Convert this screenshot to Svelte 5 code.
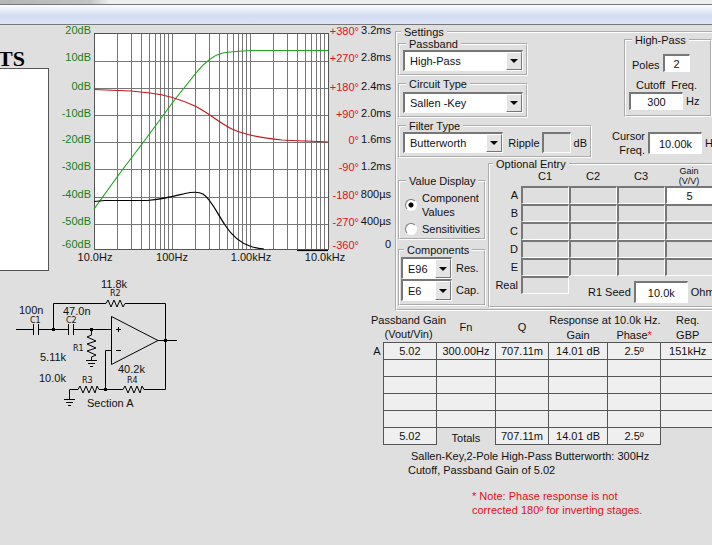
<script lang="ts">
  type Label = { x: number; y: number; text: string };

  let passband = "High-Pass";
  let circuit = "Sallen -Key";
  let filter = "Butterworth";
  let resSeries = "E96";
  let capSeries = "E6";
  let display = "values";
  let poles = "2";
  let cutoff = "300";
  let cursor = "10.00k";
  let gain = "5";
  let seed = "10.0k";

  // plot area
  const left = 94;
  const right = 328;
  const top = 33;
  const bottom = 249;
  const decade = 78;

  const hLines = [61, 88, 115, 142, 169, 197, 224];
  const vLines: number[] = [];
  for (let d = 0; d < 3; d++) {
    for (let n = 1; n < 10; n++) {
      if (d || n > 1) vLines.push(Math.round(left + decade * (d + Math.log10(n))));
    }
  }

  const rows = [
    { y: 34, db: "20dB", deg: "+380°", delay: "3.2ms" },
    { y: 61, db: "10dB", deg: "+270°", delay: "2.8ms" },
    { y: 90, db: "0dB", deg: "+180°", delay: "2.4ms" },
    { y: 117, db: "-10dB", deg: "+90°", delay: "2.0ms" },
    { y: 143, db: "-20dB", deg: "0°", delay: "1.6ms" },
    { y: 170, db: "-30dB", deg: "-90°", delay: "1.2ms" },
    { y: 198, db: "-40dB", deg: "-180°", delay: "800µs" },
    { y: 225, db: "-50dB", deg: "-270°", delay: "400µs" },
    { y: 248, db: "-60dB", deg: "-360°", delay: "0" },
  ];

  const freqs: Label[] = [
    { x: 95, y: 261, text: "10.0Hz" },
    { x: 172, y: 261, text: "100Hz" },
    { x: 251, y: 261, text: "1.00kHz" },
    { x: 325, y: 261, text: "10.0kHz" },
  ];

  const values: Label[] = [
    { x: 101, y: 288, text: "11.8k" },
    { x: 19, y: 314, text: "100n" },
    { x: 63, y: 315, text: "47.0n" },
    { x: 40, y: 361, text: "5.11k" },
    { x: 39, y: 382, text: "10.0k" },
    { x: 118, y: 373, text: "40.2k" },
    { x: 87, y: 407, text: "Section A" },
  ];

  const names: Label[] = [
    { x: 110, y: 296, text: "R2" },
    { x: 30, y: 323, text: "C1" },
    { x: 66, y: 323, text: "C2" },
    { x: 73, y: 351, text: "R1" },
    { x: 82, y: 383, text: "R3" },
    { x: 127, y: 383, text: "R4" },
  ];

  const dots = [
    [53, 329],
    [91, 329],
    [165, 340],
    [105, 389],
  ];

  const sections = ["A", "B", "C", "D", "E"];
  const caps = ["C1", "C2", "C3"];
  const results = [
    ["A", "5.02", "300.00Hz", "707.11m", "14.01 dB", "2.5º", "151kHz"],
    ["", "", "", "", "", "", ""],
    ["", "", "", "", "", "", ""],
    ["", "", "", "", "", "", ""],
    ["", "", "", "", "", "", ""],
  ];
</script>

{#snippet arrow()}
  <span class="drop" aria-hidden="true">
    <svg width="8" height="4" viewBox="0 0 8 4"><path d="M0 0H8L4 4Z" /></svg>
  </span>
{/snippet}

<div class="app">
  <header>
    <div class="chrome"></div>
    <div class="bar"></div>
  </header>

  <main>
    <section class="plot">
      <div class="parts">
        <h1>TS</h1>
        <div class="list"></div>
      </div>

      <svg class="chart" width="346" height="246" viewBox="49 25 346 246" role="img" aria-label="Response">
        <rect x={left} y={top} width={right - left} height={bottom - top} fill="#fff" />
        <g class="grid">
          {#each hLines as y}
            <line x1={left} x2={right} y1={y + 0.5} y2={y + 0.5} />
          {/each}
          {#each vLines as x}
            <line x1={x + 0.5} x2={x + 0.5} y1={top} y2={bottom} />
          {/each}
        </g>
        <path class="frame" d="M94.5 33.5H328.5V249.5H94.5Z" />

        <path class="curve green" d="M94 209L120 173L145 140L176 98L196 73C205 62 213 55 223 53C233 51 243 51 253 50.500H328" />
        <path class="curve red" d="M94 89.500L131 91L150 93C168 95 180 99 196 106.500C210 114 220 123 232 129C245 135 260 138 282 140C298 141 312 141 328 142" />
        <path class="curve black" d="M94 201.500L105 200.500H147C165 199 175 196 185 193.500C192 192 198 191 203 194C211 199 217 213 225 225C232 236 240 243 251 246.500C256 248 259 248.500 264 249" />
        <path class="curve black" d="M297 250.500H328" />

        {#each rows as r}
          <text class="db" x="91" y={r.y} text-anchor="end">{r.db}</text>
          <text class="deg" x="359" y={r.y + 1} text-anchor="end">{r.deg}</text>
          <text x="391" y={r.y} text-anchor="end">{r.delay}</text>
        {/each}
        {#each freqs as f}
          <text x={f.x} y={f.y} text-anchor="middle">{f.text}</text>
        {/each}
      </svg>
    </section>

    <fieldset class="settings">
      <legend>Settings</legend>

      <div class="upper">
        <div class="types">
          <fieldset class="short">
            <legend>Passband</legend>
            <div class="combo">
              <select aria-label="Passband" bind:value={passband}>
                <option>High-Pass</option>
                <option>Low-Pass</option>
              </select>
              {@render arrow()}
            </div>
          </fieldset>

          <fieldset class="short circuit">
            <legend>Circuit Type</legend>
            <div class="combo">
              <select aria-label="Circuit Type" bind:value={circuit}>
                <option>Sallen -Key</option>
              </select>
              {@render arrow()}
            </div>
          </fieldset>

          <fieldset>
            <legend>Filter Type</legend>
            <div class="line">
              <div class="combo filter">
                <select aria-label="Filter Type" bind:value={filter}>
                  <option>Butterworth</option>
                </select>
                {@render arrow()}
              </div>
              <label class="ripple">Ripple <input class="box off" disabled /></label>
              <span>dB</span>
            </div>
          </fieldset>
        </div>

        <div class="side">
          <fieldset class="highpass">
            <legend>High-Pass</legend>
            <label class="poles">Poles <input class="box" bind:value={poles} /></label>
            <label class="cutoff" for="cutoff">Cutoff&nbsp; Freq.</label>
            <div class="line">
              <input id="cutoff" class="box wide" bind:value={cutoff} />
              <span>Hz</span>
            </div>
          </fieldset>
          <div class="cursor">
            <label for="cursor">Cursor<br />Freq.</label>
            <input id="cursor" class="box wide tall" bind:value={cursor} />
            <span>Hz</span>
          </div>
        </div>
      </div>

      <div class="lower">
        <div class="options">
          <fieldset class="display">
            <legend>Value Display</legend>
            <label><input type="radio" value="values" bind:group={display} /><span>Component Values</span></label>
            <label><input type="radio" value="sens" bind:group={display} /><span>Sensitivities</span></label>
          </fieldset>

          <fieldset class="series">
            <legend>Components</legend>
            <div class="line">
              <div class="combo">
                <select id="res" bind:value={resSeries}>
                  <option>E96</option>
                  <option>E24</option>
                </select>
                {@render arrow()}
              </div>
              <label for="res">Res.</label>
            </div>
            <div class="line">
              <div class="combo">
                <select id="cap" bind:value={capSeries}>
                  <option>E6</option>
                  <option>E12</option>
                </select>
                {@render arrow()}
              </div>
              <label for="cap">Cap.</label>
            </div>
          </fieldset>
        </div>

        <fieldset class="entry">
          <legend>Optional Entry</legend>
          <table>
            <thead>
              <tr>
                <th class="name"></th>
                {#each caps as c}
                  <th>{c}</th>
                {/each}
                <th class="gain">Gain<br />(V/V)</th>
              </tr>
            </thead>
            <tbody>
              {#each sections as s, i}
                <tr>
                  <th class="name">{s}</th>
                  {#each caps as c}
                    <td><input class="box off" aria-label={c + " " + s} disabled /></td>
                  {/each}
                  <td>
                    {#if i === 0}
                      <input class="box" aria-label="Gain A" bind:value={gain} />
                    {:else}
                      <input class="box off" aria-label={"Gain " + s} disabled />
                    {/if}
                  </td>
                </tr>
              {/each}
              <tr class="real">
                <th class="name">Real</th>
                <td><input class="box off" aria-label="Real C1" disabled /></td>
                <td colspan="3">
                  <div class="seed">
                    <label for="seed">R1 Seed</label>
                    <input id="seed" class="box wide tall" bind:value={seed} />
                    <span>Ohms</span>
                  </div>
                </td>
              </tr>
            </tbody>
          </table>
        </fieldset>
      </div>
    </fieldset>

    <svg class="circuit-diagram" width="200" height="145" viewBox="0 271 200 145" role="img" aria-label="Section A">
      <g class="wire">
        <path d="M16 329.500H33M39 329.500H68M74 329.500H111" />
        <path d="M33.500 324V335M38.500 324V335M68.500 324V335M73.500 324V335" />
        <path d="M53.500 329.500V303.500H106L108 300L111 307L114 300L117 307L120 300L123 307L125 303.500H165.500V389.500H144L142 386L140 393L137 386L134 393L131 386L128 393L125 386L123 389.500H99L97 386L95 393L92 386L89 393L86 386L83 393L80 386L78 389.500H69.500V399" />
        <path d="M91.500 329.500V335L87 337L96 341L87 344L96 348L87 351L96 355L91.500 357V361" />
        <path d="M86 360.500H97M88 363.500H95M90 366.500H93" />
        <path d="M64 399.500H75M66 402.500H73M68 405.500H71" />
        <path d="M111.500 316.500L158 340.500L111.500 364.500Z" />
        <path d="M158 340.500H177M111 350.500H105.500V389.500" />
        <path d="M116 329.500H121M118.500 327V332M116 350.500H121" />
      </g>
      {#each dots as [x, y]}
        <rect x={x - 1} y={y - 1} width="3" height="3" />
      {/each}
      {#each values as v}
        <text x={v.x} y={v.y}>{v.text}</text>
      {/each}
      {#each names as n}
        <text class="part" x={n.x} y={n.y}>{n.text}</text>
      {/each}
    </svg>

    <section class="results">
      <table>
        <colgroup>
          <col class="c0" /><col class="c1" /><col class="c2" /><col class="c1" />
          <col class="c2" /><col class="c1" /><col class="c1" />
        </colgroup>
        <thead>
          <tr>
            <th colspan="2" rowspan="2" class="pg"><span>Passband Gain<br />(Vout/Vin)</span></th>
            <th rowspan="2">Fn</th>
            <th rowspan="2">Q</th>
            <th colspan="2">Response at 10.0k Hz.</th>
            <th>Req.</th>
          </tr>
          <tr>
            <th>Gain</th>
            <th>Phase<b>*</b></th>
            <th>GBP</th>
          </tr>
        </thead>
        <tbody>
          {#each results as r}
            <tr>
              <th>{r[0]}</th>
              {#each r.slice(1) as cell}
                <td>{cell}</td>
              {/each}
            </tr>
          {/each}
          <tr>
            <th></th>
            <td>5.02</td>
            <th class="totals">Totals</th>
            <td>707.11m</td>
            <td>14.01 dB</td>
            <td>2.5º</td>
          </tr>
        </tbody>
      </table>
      <p class="summary">Sallen-Key,2-Pole High-Pass Butterworth: 300Hz<br />Cutoff, Passband Gain of 5.02</p>
      <p class="note">* Note: Phase response is not<br />corrected 180º for inverting stages.</p>
    </section>
  </main>
</div>

<style>
  :global(body) {
    margin: 0;
    background: #dfdfdf;
  }
  .app {
    min-height: 100vh;
    overflow: hidden;
    background: #dfdfdf;
    color: #111;
    font: 11px/14px "Liberation Sans", Arial, sans-serif;
    white-space: nowrap;
  }
  .chrome {
    height: 4px;
    background: linear-gradient(90deg, #b5b5b5, #c4c4c4 90px, #eee 110px);
    border-bottom: 1px solid #777;
  }
  .bar {
    height: 19px;
    background: linear-gradient(#fbfcff, #d3dcf0 55%, #dde4f8);
    border-bottom: 1px solid #777;
  }
  main {
    display: grid;
    grid-template-columns: 371px 24px 1fr;
    grid-template-rows: 246px 40px auto;
    min-width: 724px;
  }
  select, input {
    font: inherit;
    color: inherit;
  }
  th, b {
    font-weight: normal;
  }

  /* plot */
  .plot {
    grid-area: 1 / 1 / 2 / 3;
    display: flex;
  }
  .parts {
    width: 49px;
    display: flex;
    flex-direction: column;
  }
  h1 {
    width: 25px;
    height: 43px;
    margin: 0;
    display: flex;
    align-items: flex-end;
    justify-content: flex-end;
    font: bold 22px/18px "Liberation Serif", serif;
    color: #000;
  }
  .list {
    flex: 1;
    background: #fff;
    border: 1px solid #555;
    border-left: 0;
  }
  .chart {
    display: block;
  }
  svg text {
    fill: #111;
  }
  svg .db {
    fill: #17801a;
  }
  svg .deg {
    fill: #e01020;
  }
  .grid line {
    stroke: #777;
    shape-rendering: crispEdges;
  }
  .frame {
    fill: none;
    stroke: #555;
    shape-rendering: crispEdges;
  }
  .curve {
    fill: none;
    stroke-width: 1.2;
  }
  .green { stroke: #1ea61e; }
  .red { stroke: #c8141c; }
  .black { stroke: #000; }

  /* group boxes */
  fieldset {
    min-width: 0;
    margin: 0;
    padding: 0 3px 3px;
    border: 2px groove #fff;
  }
  legend {
    margin-left: 3px;
    padding: 0 3px;
    line-height: 12px;
  }
  .settings {
    grid-area: 1 / 3 / 3 / 4;
    margin-top: 1px;
    padding: 0 1px 1px;
  }
  .upper, .lower, .line, .cursor, .seed {
    display: flex;
  }
  .line {
    align-items: center;
  }
  .types {
    width: 194px;
    display: flex;
    flex-direction: column;
    gap: 2px;
  }
  .short {
    width: 130px;
    box-sizing: border-box;
  }
  .circuit {
    padding-top: 2px;
  }

  .combo {
    display: grid;
    height: 21px;
    box-sizing: border-box;
    background: #fff;
    border: 1px solid #fff;
    border-top: 2px solid #777;
    border-left: 2px solid #777;
  }
  .combo select {
    grid-area: 1 / 1;
    width: 100%;
    min-width: 0;
    padding: 0 0 0 5px;
    border: 0;
    background: none;
    appearance: none;
  }
  .drop {
    grid-area: 1 / 1;
    justify-self: end;
    width: 16px;
    box-sizing: border-box;
    display: grid;
    place-items: center;
    background: #e4e4e4;
    border: 1px solid #fff;
    border-right-color: #777;
    border-bottom-color: #777;
    pointer-events: none;
  }
  .filter {
    width: 102px;
  }
  .box {
    width: 100%;
    height: 18px;
    box-sizing: border-box;
    padding: 0;
    text-align: center;
    background: #fff;
    border: 1px solid #fff;
    border-top: 2px solid #777;
    border-left: 2px solid #777;
    border-radius: 0;
  }
  .off {
    background: #dfdfdf;
  }
  .wide {
    width: 54px;
  }
  .tall {
    height: 22px;
  }
  .ripple {
    display: flex;
    align-items: center;
    gap: 2px;
    margin: 0 3px 0 5px;
  }
  .ripple .box {
    width: 29px;
    height: 21px;
  }

  .side {
    width: 120px;
    margin: -4px 0 0 20px;
  }
  .highpass {
    width: 88px;
    box-sizing: border-box;
    margin-left: 12px;
    padding: 8px 3px 5px;
  }
  .poles {
    display: flex;
    align-items: flex-end;
    gap: 3px;
    margin-left: 3px;
  }
  .poles .box {
    width: 27px;
  }
  .cutoff {
    display: block;
    margin: 6px 0 0 7px;
  }
  .highpass .line, .cursor, .seed {
    gap: 3px;
  }
  .cursor {
    align-items: center;
    margin-top: 12px;
  }
  .cursor label {
    text-align: right;
  }

  .lower {
    gap: 2px;
  }
  .options {
    width: 88px;
    padding-top: 17px;
    display: flex;
    flex-direction: column;
    gap: 4px;
  }
  .display {
    padding: 4px 3px 2px 5px;
  }
  .display legend {
    margin-left: 1px;
  }
  .display label {
    display: flex;
    align-items: center;
    gap: 5px;
    white-space: normal;
  }
  .display label + label {
    margin-top: 3px;
  }
  .display input {
    appearance: none;
    flex: none;
    width: 12px;
    height: 12px;
    margin: 0;
    border: 1px solid #777;
    border-right-color: #fff;
    border-bottom-color: #fff;
    border-radius: 50%;
    background: #fff;
  }
  .display input:checked {
    background: radial-gradient(circle, #000 2px, #fff 3px);
  }
  .series {
    padding: 1px 1px 3px;
  }
  .series .combo {
    width: 51px;
    height: 22px;
  }
  .series .line {
    gap: 4px;
  }

  .entry {
    flex: 1;
    padding: 0;
  }
  .entry table {
    width: 223px;
    margin-top: -4px;
    table-layout: fixed;
    border-collapse: collapse;
  }
  .entry th, .entry td {
    width: 48px;
    padding: 0;
    height: 18px;
    line-height: 10px;
  }
  .entry thead th {
    height: 20px;
  }
  .entry .name {
    width: 31px;
    padding-right: 3px;
    box-sizing: border-box;
    text-align: right;
  }
  .entry .gain {
    font-size: 9px;
  }
  .entry .box {
    display: block;
  }
  .entry .real > * {
    height: 30px;
    vertical-align: top;
  }
  .entry .real .name {
    padding-top: 4px;
  }
  .seed {
    align-items: center;
    padding: 5px 0 0 19px;
  }

  /* schematic */
  .circuit-diagram {
    grid-area: 2 / 1 / 4 / 2;
    display: block;
  }
  .wire {
    fill: none;
    stroke: #000;
  }
  svg .part {
    font: 8px "DejaVu Sans", sans-serif;
  }

  /* results */
  .results {
    grid-area: 3 / 2 / 4 / 4;
    padding-top: 1px;
  }
  .results table {
    width: 344px;
    table-layout: fixed;
    border-collapse: collapse;
    text-align: center;
  }
  .c0 { width: 12px; }
  .c1 { width: 53px; }
  .c2 { width: 58px; }
  .results th, .results td {
    height: 16px;
    padding: 0;
  }
  .results thead th {
    height: 15px;
  }
  .results td {
    background: #efefef;
    border: 1px solid #555;
  }
  .pg span {
    display: inline-block;
  }
  .results b {
    color: #e01020;
  }
  .results .totals {
    vertical-align: bottom;
  }
  p {
    margin: 0;
  }
  .summary {
    padding: 4px 0 0 37px;
    text-indent: 3px;
  }
  .note {
    padding: 12px 0 0 101px;
    color: #e01020;
  }
</style>
